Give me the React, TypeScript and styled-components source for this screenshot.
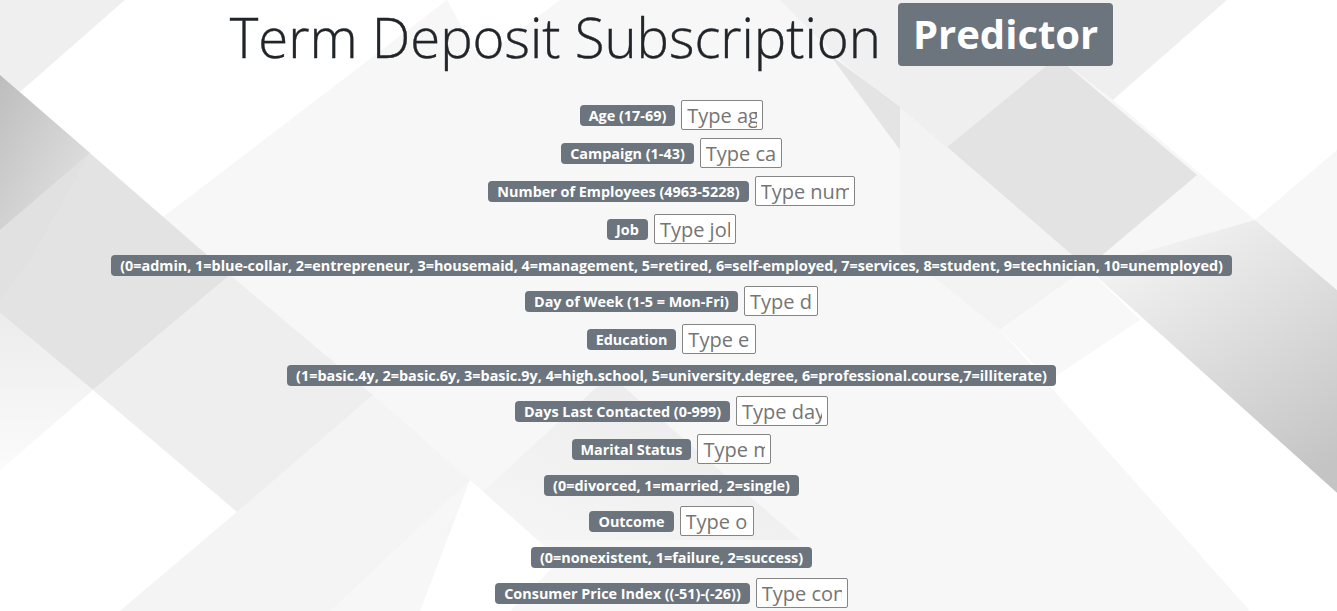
import styled, { createGlobalStyle } from "styled-components";

const GlobalStyle = createGlobalStyle`
  html, body {
    margin: 0;
    padding: 0;
    background: #f8f8f8;
    font-family: "Open Sans", "Noto Sans", sans-serif;
    color: #212529;
  }
  * { box-sizing: border-box; }
`;

// whole page, background drawing sits under the content
const Page = styled.div`
  position: relative;
  min-height: 100vh;
  overflow: hidden;
`;

const Backdrop = styled.svg`
  position: absolute;
  top: 0;
  left: 0;
  width: 1337px;
  height: 611px;
  z-index: 0;
`;

const Content = styled.main`
  position: relative;
  z-index: 1;
  padding-left: 6px;
  text-align: center;
`;

const Title = styled.h1`
  margin: 0 0 26px;
  font-size: 54.5px;
  font-weight: 300;
  line-height: 74px;
  color: #212529;
  display: flex;
  justify-content: center;
  align-items: flex-start;
  gap: 17px;
`;

const TitleText = styled.span`
  white-space: nowrap;
  -webkit-text-stroke: 0.4px #212529;
`;

const TitleBadge = styled.span`
  display: inline-block;
  background: #6c757d;
  color: #fff;
  font-weight: 700;
  font-size: 40px;
  line-height: 1;
  padding: 11px 15px 12px;
  border-radius: 4px;
  margin-top: 3px;
`;

const Form = styled.form`
  display: flex;
  flex-direction: column;
  align-items: center;
  gap: 8px;
`;

const Row = styled.div<{ $legend?: boolean }>`
  display: flex;
  align-items: center;
  justify-content: center;
  gap: 6px;
  height: ${(p) => (p.$legend ? "26px" : "30px")};
`;

const Badge = styled.label`
  display: inline-block;
  background: #6c757d;
  color: #fff;
  font-weight: 700;
  font-size: 14.4px;
  line-height: 15px;
  padding: 3px 9px 3px;
  border-radius: 4px;
  white-space: nowrap;
`;

const Field = styled.input<{ $w: number }>`
  width: ${(p) => p.$w}px;
  height: 30px;
  border: 1px solid #858585;
  border-radius: 2px;
  background: #fff;
  font-family: "Open Sans", "Noto Sans", sans-serif;
  font-size: 20px;
  padding: 0 5px;
  color: #212529;
  outline: none;

  &::placeholder {
    color: #757575;
  }
`;

type Item =
  | { kind: "input"; label: string; placeholder: string; w: number }
  | { kind: "legend"; text: string };

const items: Item[] = [
  { kind: "input", label: "Age (17-69)", placeholder: "Type age", w: 82 },
  { kind: "input", label: "Campaign (1-43)", placeholder: "Type campaign", w: 82 },
  { kind: "input", label: "Number of Employees (4963-5228)", placeholder: "Type number of employees", w: 100 },
  { kind: "input", label: "Job", placeholder: "Type job", w: 82 },
  {
    kind: "legend",
    text: "(0=admin, 1=blue-collar, 2=entrepreneur, 3=housemaid, 4=management, 5=retired, 6=self-employed, 7=services, 8=student, 9=technician, 10=unemployed)",
  },
  { kind: "input", label: "Day of Week (1-5 = Mon-Fri)", placeholder: "Type day", w: 74 },
  { kind: "input", label: "Education", placeholder: "Type education", w: 74 },
  {
    kind: "legend",
    text: "(1=basic.4y, 2=basic.6y, 3=basic.9y, 4=high.school, 5=university.degree, 6=professional.course,7=illiterate)",
  },
  { kind: "input", label: "Days Last Contacted (0-999)", placeholder: "Type days", w: 92 },
  { kind: "input", label: "Marital Status", placeholder: "Type marital", w: 74 },
  { kind: "legend", text: "(0=divorced, 1=married, 2=single)" },
  { kind: "input", label: "Outcome", placeholder: "Type outcome", w: 74 },
  { kind: "legend", text: "(0=nonexistent, 1=failure, 2=success)" },
  { kind: "input", label: "Consumer Price Index ((-51)-(-26))", placeholder: "Type consumer price index", w: 92 },
];

// the grey diamond pattern behind the form
const Pattern = () => (
  <Backdrop viewBox="0 0 1337 611" preserveAspectRatio="none">
    <defs>
      <linearGradient id="shadeL" x1="0" y1="0" x2="1" y2="1">
        <stop offset="0" stopColor="#bdbdbd" />
        <stop offset="1" stopColor="#e6e6e6" />
      </linearGradient>
      <linearGradient id="shadeR" x1="0.2" y1="0" x2="0.8" y2="1">
        <stop offset="0" stopColor="#f6f6f6" />
        <stop offset="1" stopColor="#c4c4c4" />
      </linearGradient>
      <linearGradient id="fadeDown" x1="0" y1="0" x2="0" y2="1">
        <stop offset="0" stopColor="#ececec" />
        <stop offset="1" stopColor="#fbfbfb" />
      </linearGradient>
      <linearGradient id="midShade" x1="1" y1="0" x2="0" y2="1">
        <stop offset="0" stopColor="#d8d8d8" />
        <stop offset="1" stopColor="#f7f7f7" />
      </linearGradient>
    </defs>
    <rect width="1337" height="611" fill="#f7f7f7" />
    {/* left side */}
    <polygon points="0,0 125,0 20,92 0,75" fill="#efefef" />
    <polygon points="125,0 447,0 163,217 20,92" fill="#ffffff" />
    <polygon points="0,75 230,275 93,390 0,313" fill="#e3e3e3" />
    <polygon points="0,75 90,153 0,230" fill="url(#shadeL)" />
    <polygon points="0,230 90,153 30,260 0,300" fill="#e0e0e0" opacity="0.6" />
    <polygon points="230,275 373,395 237,512 93,390" fill="#eeeeee" />
    <polygon points="0,313 93,390 0,470" fill="url(#fadeDown)" />
    <polygon points="0,470 93,390 237,512 120,611 0,611" fill="#ffffff" />
    <polygon points="237,512 373,395 470,480 330,611 120,611" fill="#f4f4f4" />
    {/* middle */}
    <polygon points="447,0 560,0 480,60" fill="#ffffff" />
    <polygon points="610,375 800,540 430,540" fill="url(#midShade)" opacity="0.45" />
    <polygon points="470,480 560,560 510,611 420,611" fill="#ffffff" />
    <polygon points="780,0 900,0 900,110 840,60" fill="#f0f0f0" />
    <polygon points="830,55 900,107 947,147 900,150" fill="#dcdcdc" opacity="0.7" />
    {/* right side */}
    <polygon points="900,0 1227,0 1113,100 1057,57 947,147 900,107" fill="#efefef" />
    <polygon points="1227,0 1337,0 1337,150 1255,220 1113,100" fill="#ffffff" />
    <polygon points="947,147 1057,57 1197,175 1087,268" fill="#e3e3e3" />
    <polygon points="900,107 1087,268 1000,330 900,250" fill="#f3f3f3" />
    <polygon points="1087,268 1255,220 1337,290 1337,493" fill="url(#shadeR)" />
    <polygon points="1255,220 1337,150 1337,290" fill="#f7f7f7" />
    <polygon points="1337,493 1087,268 1000,330 1250,611 1337,611" fill="#ffffff" />
    <polygon points="1000,330 1087,268 1140,320 1050,380" fill="#f8f8f8" />
  </Backdrop>
);

const App = () => {
  return (
    <Page>
      <GlobalStyle />
      <Pattern />
      <Content>
        <Title>
          <TitleText>Term Deposit Subscription</TitleText>
          <TitleBadge>Predictor</TitleBadge>
        </Title>
        <Form>
          {items.map((item, i) =>
            item.kind === "input" ? (
              <Row key={i}>
                <Badge>{item.label}</Badge>
                <Field type="text" placeholder={item.placeholder} $w={item.w} />
              </Row>
            ) : (
              <Row key={i} $legend>
                <Badge>{item.text}</Badge>
              </Row>
            )
          )}
        </Form>
      </Content>
    </Page>
  );
};

export default App;
